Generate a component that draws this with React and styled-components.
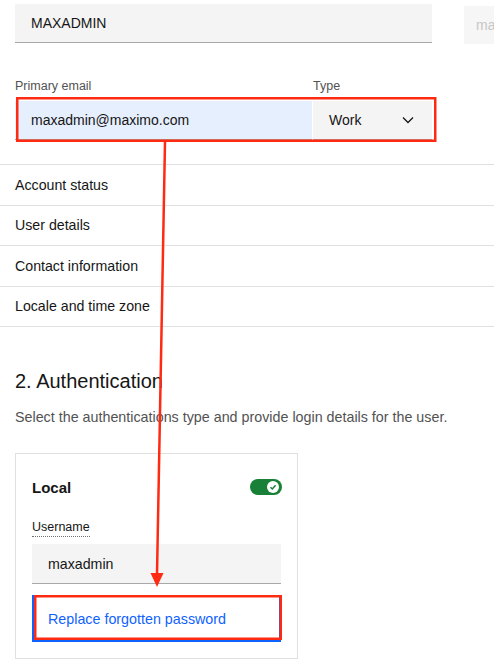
import React from "react";
import styled, { createGlobalStyle } from "styled-components";

const Global = createGlobalStyle`
  html, body { margin: 0; padding: 0; background: #ffffff; }
  body { font-family: "Liberation Sans", Arial, Helvetica, sans-serif; color: #161616; }
  * { box-sizing: border-box; }
`;

const Page = styled.div`
  position: relative;
  width: 494px;
  height: 671px;
  overflow: hidden;
  background: #fff;
`;

const Inset = styled.div`
  padding-left: 15px;
`;

const TopRow = styled.div`
  display: flex;
  gap: 32px;
  padding-top: 4px;
  align-items: flex-start;
`;

const TextField = styled.div`
  display: flex;
  align-items: center;
  flex: none;
  width: ${(p) => p.$w}px;
  height: 39px;
  padding-left: 16px;
  font-size: 14px;
  background: ${(p) => (p.$focus ? "#e6effd" : "#f4f4f4")};
  border-bottom: 1px solid #a8a8a8;
  color: #161616;
`;

const GhostField = styled.div`
  display: flex;
  align-items: center;
  flex: none;
  width: 80px;
  height: 38px;
  margin-top: 2px;
  padding-left: 12px;
  font-size: 14px;
  background: #f6f6f6;
  color: #c6c6c6;
  overflow: hidden;
  white-space: nowrap;
`;

const LabelRow = styled.div`
  display: flex;
  margin-top: 34px;
`;

const Label = styled.div`
  width: ${(p) => p.$w || "auto"};
  font-size: 12.5px;
  line-height: 16px;
  color: #525252;
`;

const FieldRow = styled.div`
  display: flex;
  gap: 1px;
  margin-top: 7px;
`;

const Select = styled.div`
  display: flex;
  align-items: center;
  justify-content: space-between;
  width: 119px;
  height: 39px;
  padding: 0 18px 0 16px;
  font-size: 14px;
  background: #f4f4f4;
  border-bottom: 1px solid #a8a8a8;
`;

const NavList = styled.div`
  margin-top: 24px;
  border-bottom: 1px solid #e0e0e0;
`;

const NavRow = styled.div`
  display: flex;
  align-items: center;
  height: 40.5px;
  padding-left: 15px;
  border-top: 1px solid #e0e0e0;
  font-size: 14.2px;
  color: #161616;
`;

const Section = styled.div`
  padding-left: 15px;
  padding-top: 42px;
`;

const Heading = styled.h2`
  margin: 0;
  font-size: 20px;
  line-height: 24px;
  font-weight: 400;
  color: #161616;
`;

const Description = styled.p`
  margin: 14px 0 0;
  font-size: 14.3px;
  line-height: 20px;
  color: #525252;
`;

const Card = styled.div`
  width: 283px;
  margin-top: 26px;
  padding: 23px 16px 16px 16px;
  border: 1px solid #e0e0e0;
`;

const CardHeader = styled.div`
  display: flex;
  align-items: center;
  justify-content: space-between;
  height: 20px;
`;

const CardTitle = styled.div`
  font-size: 15px;
  font-weight: 700;
`;

const Toggle = styled.div`
  position: relative;
  width: 32px;
  height: 16px;
  border-radius: 8px;
  background: #198038;
  margin-right: -1px;
`;

const Knob = styled.div`
  position: absolute;
  top: 2px;
  right: 3px;
  width: 12px;
  height: 12px;
  border-radius: 50%;
  background: #fff;
  display: flex;
  align-items: center;
  justify-content: center;
`;

const FieldLabel = styled.div`
  display: inline-block;
  margin-top: 22px;
  font-size: 12.5px;
  line-height: 16px;
  color: #161616;
  padding-bottom: 1px;
  border-bottom: 1px dotted #6f6f6f;
`;

const CardInput = styled.div`
  display: flex;
  align-items: center;
  height: 40px;
  margin-top: 7px;
  padding-left: 16px;
  font-size: 14.2px;
  background: #f4f4f4;
  border-bottom: 1px solid #a8a8a8;
`;

const LinkButton = styled.div`
  display: flex;
  align-items: center;
  height: 47px;
  margin-top: 11px;
  padding-left: 14px;
  font-size: 14.3px;
  color: #0f62fe;
  border: 2px solid #0f62fe;
  background: #fff;
`;

const Overlay = styled.svg`
  position: absolute;
  top: 0;
  left: 0;
  pointer-events: none;
`;

const Chevron = () => (
  <svg width="12" height="8" viewBox="0 0 12 8">
    <path d="M1 1.5 L6 6.5 L11 1.5" fill="none" stroke="#161616" strokeWidth="1.3" />
  </svg>
);

const Check = () => (
  <svg width="8" height="8" viewBox="0 0 8 8">
    <path d="M1.5 4.2 L3.3 6 L6.6 2.2" fill="none" stroke="#198038" strokeWidth="1.5" />
  </svg>
);

const navItems = ["Account status", "User details", "Contact information", "Locale and time zone"];

export default function App() {
  return (
    <>
      <Global />
      <Page>
        <Inset>
          <TopRow>
            <TextField $w={417}>MAXADMIN</TextField>
            <GhostField>maxadmin</GhostField>
          </TopRow>
          <LabelRow>
            <Label $w="298px">Primary email</Label>
            <Label>Type</Label>
          </LabelRow>
          <FieldRow>
            <TextField $w={297} $focus>maxadmin@maximo.com</TextField>
            <Select>
              <span>Work</span>
              <Chevron />
            </Select>
          </FieldRow>
        </Inset>
        <NavList>
          {navItems.map((n) => (
            <NavRow key={n}>{n}</NavRow>
          ))}
        </NavList>
        <Section>
          <Heading>2. Authentication</Heading>
          <Description>Select the authentications type and provide login details for the user.</Description>
          <Card>
            <CardHeader>
              <CardTitle>Local</CardTitle>
              <Toggle>
                <Knob>
                  <Check />
                </Knob>
              </Toggle>
            </CardHeader>
            <FieldLabel>Username</FieldLabel>
            <CardInput>maxadmin</CardInput>
            <LinkButton>Replace forgotten password</LinkButton>
          </Card>
        </Section>
        <Overlay width="494" height="671" viewBox="0 0 494 671">
          <rect x="17.25" y="98.25" width="418" height="42.5" fill="none" stroke="#ff2a12" strokeWidth="2.5" />
          <line x1="165" y1="142" x2="157" y2="575" stroke="#ff2a12" strokeWidth="2.5" />
          <polygon points="150.5,573 163.5,573 157,587" fill="#ff2a12" />
          <rect x="35.25" y="596.25" width="245.5" height="42.5" fill="none" stroke="#ff2a12" strokeWidth="2.5" />
        </Overlay>
      </Page>
    </>
  );
}
